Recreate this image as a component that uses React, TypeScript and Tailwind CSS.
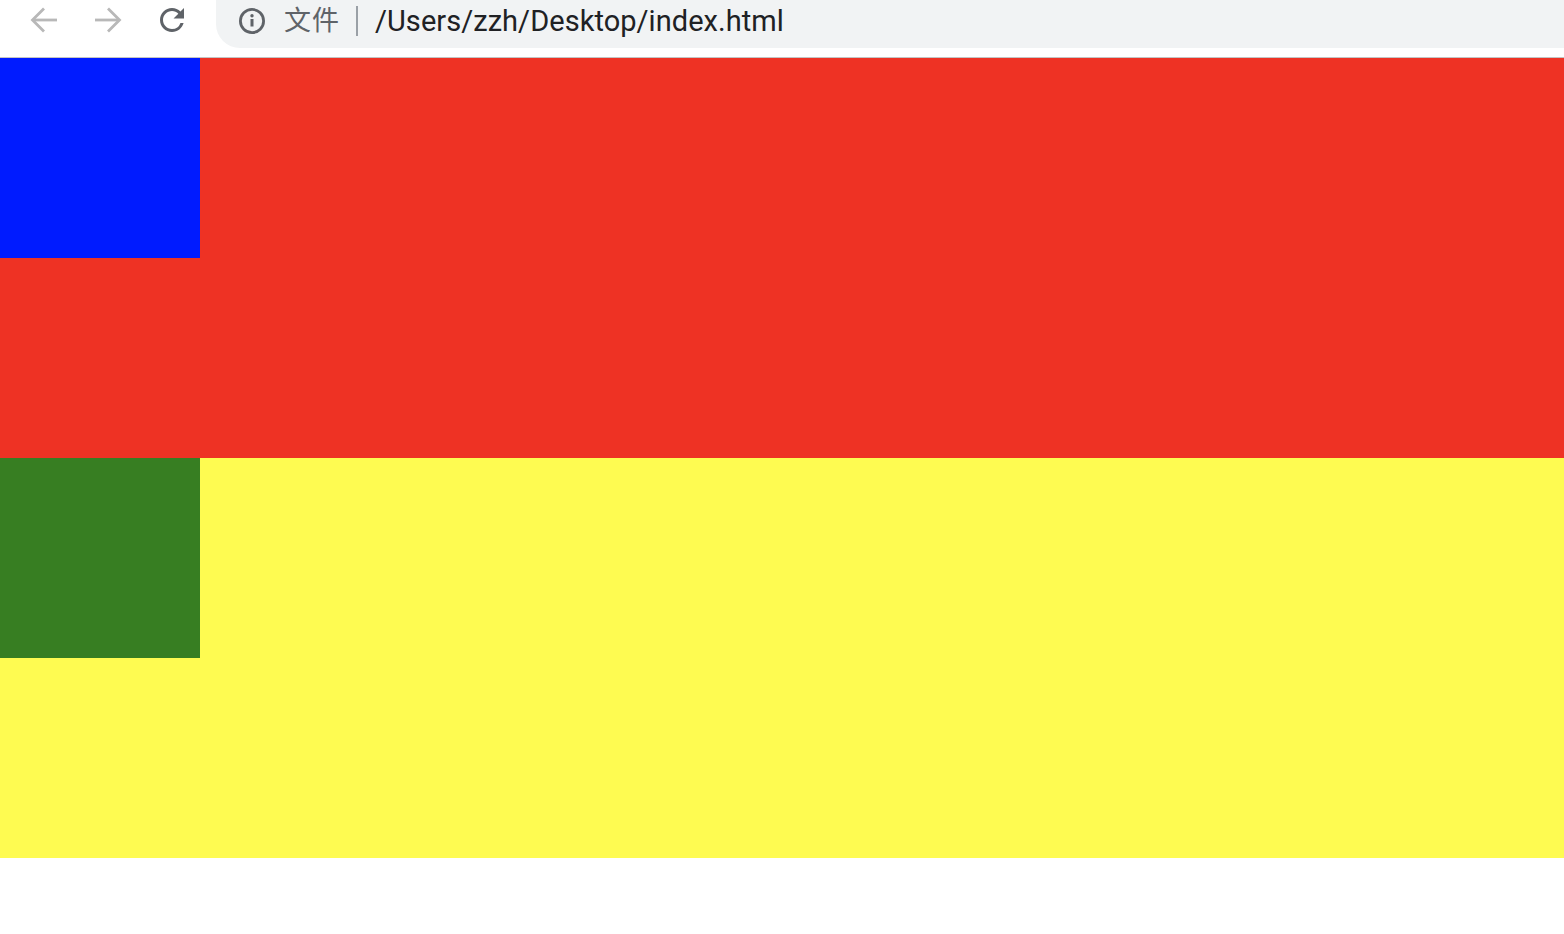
import React from 'react';

const BackIcon = () => (
  <svg width="30" height="30" viewBox="0 0 30 30" fill="none" stroke="#b8b8b8" strokeWidth="2.8">
    <path d="M28 15H4"/>
    <path d="M15 3.5L3.5 15 15 26.5"/>
  </svg>
);

const ForwardIcon = () => (
  <svg width="30" height="30" viewBox="0 0 30 30" fill="none" stroke="#b8b8b8" strokeWidth="2.8">
    <path d="M2 15h24"/>
    <path d="M15 3.5L26.5 15 15 26.5"/>
  </svg>
);

const ReloadIcon = () => (
  <svg width="36" height="36" viewBox="0 0 24 24" fill="#5f6368">
    <path d="M17.65 6.35A7.958 7.958 0 0 0 12 4c-4.42 0-7.99 3.58-7.99 8s3.57 8 7.99 8c3.73 0 6.84-2.55 7.73-6h-2.08A5.99 5.99 0 0 1 12 18c-3.31 0-6-2.69-6-6s2.69-6 6-6c1.66 0 3.14.69 4.22 1.78L13 11h7V4l-2.35 2.35z"/>
  </svg>
);

const InfoIcon = () => (
  <svg width="28" height="28" viewBox="0 0 28 28" fill="none">
    <circle cx="14" cy="14" r="11.6" stroke="#5f6368" strokeWidth="2.8"/>
    <rect x="12.5" y="12" width="3" height="7.5" fill="#5f6368"/>
    <circle cx="14" cy="8.8" r="1.7" fill="#5f6368"/>
  </svg>
);

const App = () => {
  return (
    <div className="w-[1564px] h-[934px] bg-white" style={{fontFamily: '"Roboto", "Noto Sans CJK SC", sans-serif'}}>
      <div className="h-[58px] flex items-start border-b border-[#c4c4c4]">
        <div className="flex items-center h-[40px] shrink-0">
          <div className="w-[64px] flex justify-center pl-[24px]"><BackIcon/></div>
          <div className="w-[64px] flex justify-center pl-[24px]"><ForwardIcon/></div>
          <div className="w-[64px] flex justify-center pl-[24px]"><ReloadIcon/></div>
        </div>
        <div className="ml-[24px] flex-1 h-[48px] bg-[#f1f3f4] rounded-bl-[24px] flex items-center pl-[22px] pb-[6px]">
          <InfoIcon/>
          <span className="ml-[18px] text-[27px] leading-none text-[#5f6368] tracking-[1px]">文件</span>
          <div className="ml-[16px] w-[2px] h-[30px] bg-[#9aa0a6]"/>
          <span className="ml-[17px] text-[29px] tracking-[0.05px] leading-none text-[#202124]">/Users/zzh/Desktop/index.html</span>
        </div>
      </div>
      <div className="flex flex-col">
        <div className="h-[400px] bg-[#ee3224]">
          <div className="w-[200px] h-[200px] bg-[#001bff]"/>
        </div>
        <div className="h-[400px] bg-[#fefb51]">
          <div className="w-[200px] h-[200px] bg-[#377e22]"/>
        </div>
      </div>
    </div>
  );
};

export default App;
